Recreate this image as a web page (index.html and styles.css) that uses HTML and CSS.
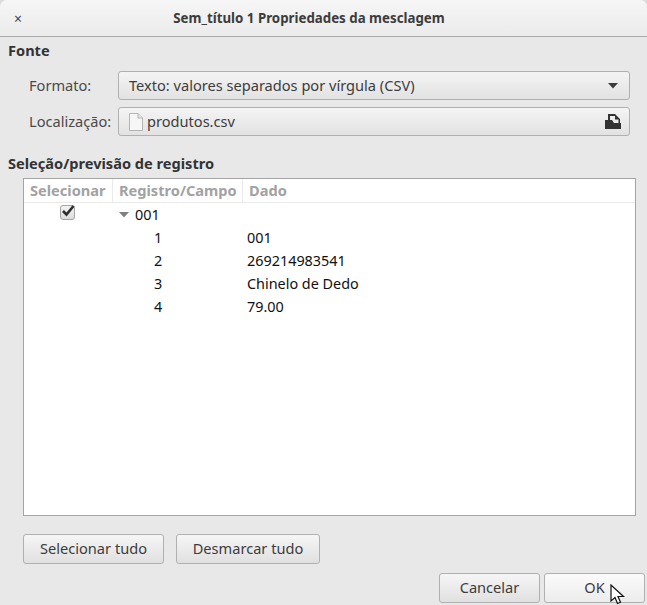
FILE: index.html
```html
<!DOCTYPE html>
<html lang="pt-BR">
<head>
    <meta charset="UTF-8">
    <title>Sem_título 1 Propriedades da mesclagem</title>
    <link rel="stylesheet" href="styles.css">
</head>
<body>
    <div class="window">
        <header class="titlebar">
            <span class="close">&times;</span>
            <h1 class="title">Sem_título 1 Propriedades da mesclagem</h1>
        </header>

        <section class="source">
            <h2 class="heading">Fonte</h2>
            <div class="field">
                <label class="field-label">Formato:</label>
                <div class="control">
                    <span class="control-text">Texto: valores separados por vírgula (CSV)</span>
                    <svg class="arrow" width="10" height="6" viewBox="0 0 10 6"><path d="M0 0h10L5 5.5z" fill="#3c3c3c"/></svg>
                </div>
            </div>
            <div class="field">
                <label class="field-label">Localização:</label>
                <div class="control">
                    <svg class="file-icon" width="14" height="18" viewBox="0 0 14 18"><path d="M.5.5h8.500l4.500 4.500v12.500H.5z" fill="#f6f6f6" stroke="#b4b4b4"/><path d="M9 .5v4.500h4.500" fill="#e4e4e4" stroke="#b4b4b4"/></svg>
                    <span class="control-text">produtos.csv</span>
                    <svg class="open-icon" width="16" height="16" viewBox="0 0 16 16"><path d="M3 6V0h7l5 5v4h1v6H0V6zM5 6h2l2 3h4.500V5.500H10V2H5z" fill="#333" fill-rule="evenodd"/></svg>
                </div>
            </div>
        </section>

        <section class="records">
            <h2 class="heading">Seleção/previsão de registro</h2>
            <div class="table">
                <div class="table-head">
                    <div class="col col-select">Selecionar</div>
                    <div class="col col-record">Registro/Campo</div>
                    <div class="col col-data">Dado</div>
                </div>
                <div class="row">
                    <div class="col-select cell-check">
                        <span class="check">
                            <svg width="14" height="12" viewBox="0 0 14 12"><path d="M2 6l3.500 3.500L12.500 1" fill="none" stroke="#2e2e2e" stroke-width="2.600"/></svg>
                        </span>
                    </div>
                    <div class="col-record cell-parent">
                        <svg class="expander" width="10" height="6" viewBox="0 0 10 6"><path d="M0 0h10L5 5.500z" fill="#808080"/></svg>
                        001
                    </div>
                </div>
                <div class="row"><div class="col-select"></div><div class="col-record cell-num">1</div><div class="col-data cell-data">001</div></div>
                <div class="row"><div class="col-select"></div><div class="col-record cell-num">2</div><div class="col-data cell-data">269214983541</div></div>
                <div class="row"><div class="col-select"></div><div class="col-record cell-num">3</div><div class="col-data cell-data">Chinelo de Dedo</div></div>
                <div class="row"><div class="col-select"></div><div class="col-record cell-num">4</div><div class="col-data cell-data">79.00</div></div>
            </div>
        </section>

        <div class="table-actions">
            <button class="btn btn-select">Selecionar tudo</button>
            <button class="btn btn-clear">Desmarcar tudo</button>
        </div>

        <div class="dialog-actions">
            <button class="btn btn-dialog">Cancelar</button>
            <button class="btn btn-dialog btn-ok">OK</button>
        </div>

        <svg class="cursor" width="15" height="22" viewBox="0 0 15 22"><path d="M1 1v16l4-3.500 2.500 6 3-1.300-2.500-5.700h5.500z" fill="#fff" stroke="#111" stroke-width="1.200"/></svg>
    </div>
</body>
</html>
```

FILE: styles.css
```css
* {
    box-sizing: border-box;
    margin: 0;
    padding: 0;
}

html, body {
    width: 647px;
    height: 605px;
    overflow: hidden;
    background: #dcdcdc;
}

.window {
    position: relative;
    width: 647px;
    height: 605px;
    overflow: hidden;
    border-radius: 7px 7px 0 0;
    background: #e8e8e8;
    color: #3c3c3c;
    font-family: 'Noto Sans', 'Open Sans', sans-serif;
    font-size: 14.6px;
}

.titlebar {
    display: flex;
    align-items: center;
    justify-content: center;
    position: relative;
    height: 37px;
    padding-right: 29px;
    border-bottom: 1px solid #a8a8a8;
    background: linear-gradient(#f6f6f6, #ebebeb);
}

.close {
    position: absolute;
    left: 14px;
    top: 10px;
    font-size: 14px;
    line-height: 18px;
    color: #444;
}

.title {
    font-size: 13.3px;
    font-weight: 700;
    color: #3c3c3c;
}

.heading {
    font-size: 14.6px;
    line-height: 20px;
    font-weight: 700;
    color: #333;
}

.source {
    padding: 3px 17px 0 8px;
}

.field {
    display: flex;
    align-items: center;
    height: 29px;
    margin-bottom: 7px;
}

.heading + .field {
    margin-top: 11px;
}

.field-label {
    width: 110px;
    padding: 0 0 2px 21px;
    color: #4a4a4a;
}

.control {
    display: flex;
    align-items: center;
    flex: 1;
    height: 29px;
    padding: 0 11px 0 10px;
    border: 1px solid #b0b0b0;
    border-radius: 3px;
    background: linear-gradient(#f4f4f4, #e2e2e2);
}

.control-text {
    flex: 1;
    padding-bottom: 2px;
    color: #3c3c3c;
}

.file-icon {
    margin-right: 4px;
}

.open-icon {
    margin: 1px -3px 0 0;
}

.records {
    padding: 10px 11px 0 8px;
}

.table {
    margin: 5px 0 0 15px;
    height: 338px;
    border: 1px solid #a4a4a4;
    background: #fff;
    color: #111;
}

.table-head {
    display: flex;
    height: 24px;
    border-bottom: 1px solid #eaeaea;
    font-weight: 700;
    color: #a2a2a2;
}

.col {
    line-height: 23px;
    padding-left: 6px;
    border-right: 1px solid #eaeaea;
    white-space: nowrap;
}

.col-select {
    width: 89px;
    flex: none;
}

.col-record {
    width: 130px;
    flex: none;
}

.col-data {
    flex: 1;
    border-right: none;
}

.row {
    display: flex;
    align-items: center;
    height: 23px;
    font-size: 14.4px;
}

.cell-check {
    display: flex;
    justify-content: center;
}

.check {
    display: flex;
    align-items: center;
    justify-content: center;
    width: 15px;
    height: 15px;
    margin: -4px 2px 0 0;
    border: 1px solid #a4a4a4;
    border-radius: 3px;
    background: linear-gradient(#f2f2f2, #dcdcdc);
}

.check svg {
    flex: none;
    margin: -3px -1px 0 0;
}

.cell-parent {
    display: flex;
    align-items: center;
    padding-left: 6px;
}

.expander {
    margin-right: 6px;
}

.cell-num {
    padding-left: 41px;
}

.cell-data {
    padding-left: 4px;
}

.table-actions {
    display: flex;
    gap: 12px;
    padding: 18px 0 0 23px;
}

.btn {
    height: 30px;
    padding-bottom: 2px;
    border: 1px solid #b0b0b0;
    border-radius: 3px;
    background: linear-gradient(#f6f6f6, #e0e0e0);
    color: #3c3c3c;
    font-family: inherit;
    font-size: 14.6px;
}

.btn-select {
    width: 141px;
}

.btn-clear {
    width: 144px;
}

.dialog-actions {
    display: flex;
    justify-content: flex-end;
    gap: 4px;
    padding: 9px 2px 0 0;
}

.btn-dialog {
    width: 101px;
}

.btn-ok {
    background: linear-gradient(#fbfbfb, #ececec);
}

.cursor {
    position: absolute;
    left: 610px;
    top: 584px;
}
```
